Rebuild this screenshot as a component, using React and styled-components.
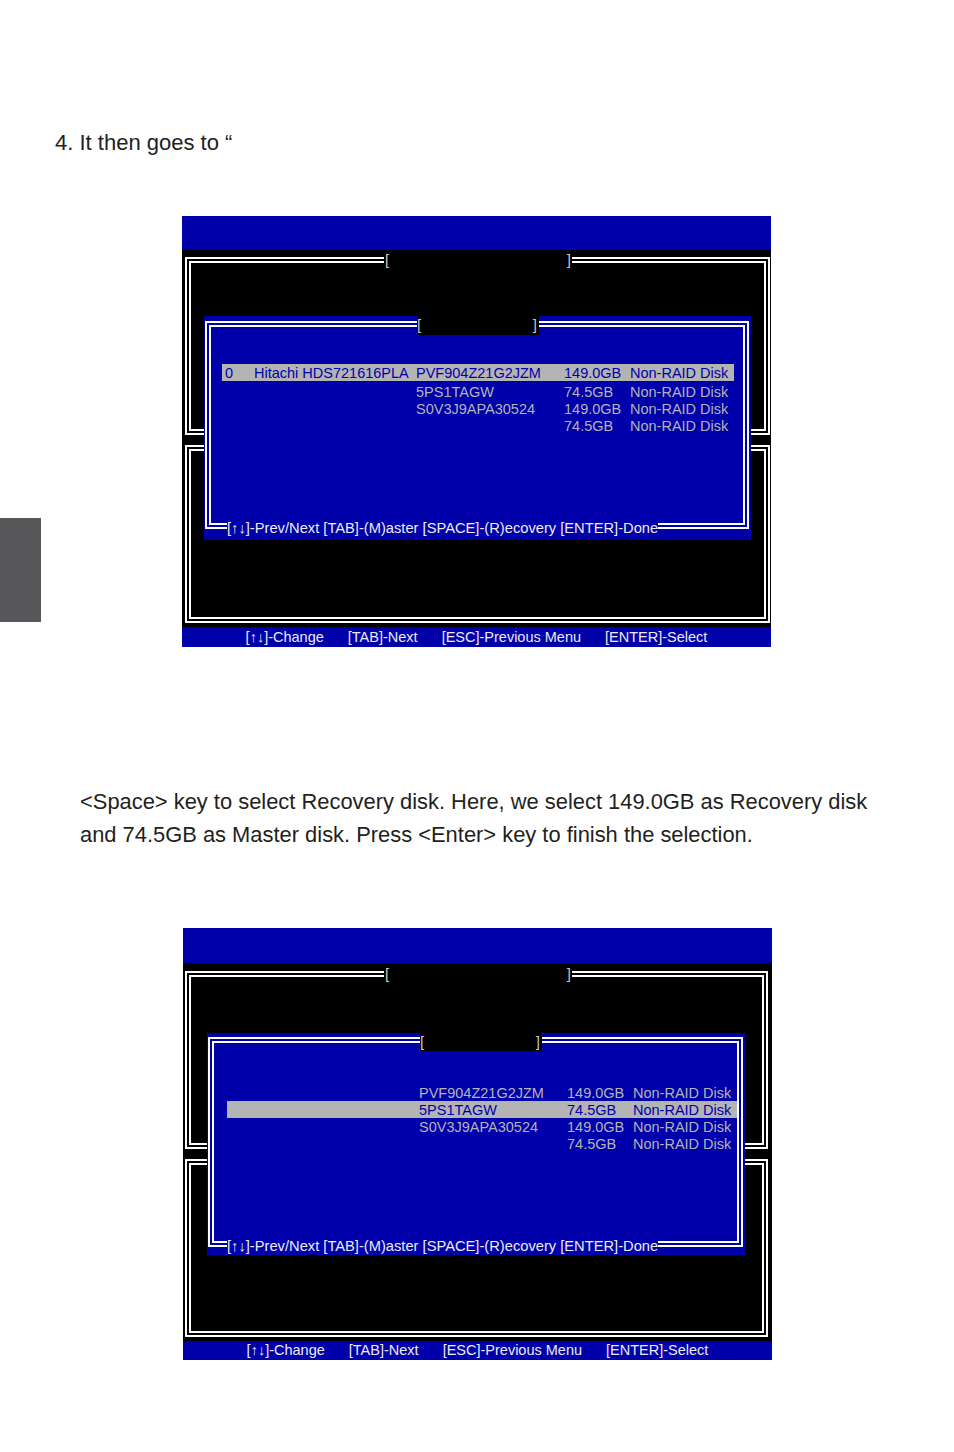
import React from 'react'
import styled, { createGlobalStyle } from 'styled-components'

const GlobalStyle = createGlobalStyle`
  html, body {
    margin: 0;
    padding: 0;
    background: #ffffff;
  }
  body {
    font-family: "Liberation Sans", Arial, sans-serif;
  }
`

const BLUE = '#0000aa'
const GREY = '#b4b4b4'
const LIGHT = '#ececec'

const Page = styled.div`
  width: 954px;
  min-height: 1452px;
  display: flex;
  flex-direction: column;
  color: #231f20;
`

const Intro = styled.p`
  margin: 0;
  padding: 130px 0 0 55px;
  font-size: 22px;
  line-height: 26px;
`

const FirstRow = styled.div`
  display: flex;
  align-items: flex-start;
  margin-top: 60px;
`

const SideTab = styled.div`
  width: 41px;
  height: 104px;
  margin-top: 302px;
  background: #58585a;
  flex-shrink: 0;
`

const Paragraph = styled.p`
  margin: 138px 0 0;
  padding-left: 80px;
  font-size: 21.9px;
  line-height: 33px;
`

const Screen = styled.div`
  width: 589px;
  display: flex;
  flex-direction: column;
  margin-left: ${p => p.$left}px;
  margin-top: ${p => p.$top || 0}px;
  font-family: "Liberation Sans", Arial, sans-serif;
  font-size: 14.5px;
`

const HeaderBar = styled.div`
  height: ${p => p.$h}px;
  background: ${BLUE};
`

const Body = styled.div`
  position: relative;
  height: ${p => p.$h}px;
  box-sizing: border-box;
  padding: ${p => p.$pad};
  background: #000;
  display: flex;
  flex-direction: column;
  gap: 10px;
`

const FrameBox = styled.div`
  position: relative;
  flex: 1;
  border: 6px double #ffffff;
`

const BoxTitle = styled.div`
  position: absolute;
  top: -11px;
  left: 193px;
  width: 188px;
  height: 16px;
  background: #000;
  display: flex;
  justify-content: space-between;
  padding: 0 1px;
  box-sizing: border-box;
  font-size: 15px;
  line-height: 16px;
  color: #c8c8c8;
`

const KeyBar = styled.div`
  height: ${p => p.$h}px;
  background: ${BLUE};
  color: ${LIGHT};
  display: flex;
  justify-content: center;
  align-items: center;
  gap: 24px;
  padding-bottom: 1px;
  box-sizing: border-box;
  line-height: 16px;
  white-space: nowrap;
`

const Dialog = styled.div`
  position: absolute;
  top: ${p => p.$d.top}px;
  left: ${p => p.$d.left}px;
  width: ${p => p.$d.width}px;
  height: ${p => p.$d.height}px;
  box-sizing: border-box;
  padding: ${p => p.$d.padTop}px 2px ${p => p.$d.padBottom}px 1px;
  background: ${BLUE};
  display: flex;
  flex-direction: column;
`

const DialogFrame = styled.div`
  flex: 1;
  border: 6px double #ffffff;
  padding-top: ${p => p.$d.rowsTop}px;
  padding-left: ${p => p.$d.rowsLeft}px;
`

const DialogTitle = styled.div`
  position: absolute;
  top: 0;
  left: 213px;
  width: 122px;
  height: ${p => p.$h}px;
  background: #000;
  display: flex;
  justify-content: space-between;
  align-items: flex-start;
  padding: 1px 2px 0 0;
  box-sizing: border-box;
  font-size: 15px;
  line-height: 15px;
  color: #c8c8c8;
`

const DialogHint = styled.div`
  position: absolute;
  left: ${p => p.$d.footLeft}px;
  bottom: ${p => p.$d.padBottom - 7}px;
  height: 16px;
  line-height: 16px;
  font-size: 14.7px;
  background: ${BLUE};
  color: ${LIGHT};
  white-space: nowrap;
`

const Rows = styled.div`
  width: ${p => p.$w}px;
  display: flex;
  flex-direction: column;
`

const DiskRow = styled.div`
  height: 17px;
  display: grid;
  grid-template-columns: 29px 162px 148px 66px auto;
  align-items: center;
  padding-left: ${p => p.$padL}px;
  margin-bottom: ${p => p.$after || 0}px;
  line-height: 16px;
  white-space: nowrap;
  background: ${p => (p.$sel ? GREY : 'transparent')};
  color: ${p => (p.$sel ? BLUE : GREY)};
`

const keys = ['[↑↓]-Change', '[TAB]-Next', '[ESC]-Previous Menu', '[ENTER]-Select']

const screens = [
  {
    id: 1,
    left: 141,
    headerH: 34,
    bodyH: 377,
    footerH: 20,
    bodyPad: '7px 1px 4px 3px',
    titleH: 19,
    dialog: { top: 66, left: 22, width: 547, height: 224, padTop: 5, padBottom: 11, footLeft: 23, rowsTop: 37, rowsLeft: 11, rowsWidth: 512, padL: 3 },
    rows: [
      { id: '0', model: 'Hitachi HDS721616PLA', serial: 'PVF904Z21G2JZM', size: '149.0GB', sel: true, after: 2 },
      { id: '', model: '', serial: '5PS1TAGW', size: '74.5GB' },
      { id: '', model: '', serial: 'S0V3J9APA30524', size: '149.0GB' },
      { id: '', model: '', serial: '', size: '74.5GB' },
    ],
  },
  {
    id: 2,
    left: 183,
    top: 77,
    headerH: 35,
    bodyH: 378,
    footerH: 19,
    bodyPad: '8px 4px 4px 2px',
    titleH: 18,
    dialog: { top: 70, left: 24, width: 538, height: 222, padTop: 4, padBottom: 8, footLeft: 20, rowsTop: 41, rowsLeft: 13, rowsWidth: 510, padL: 1 },
    rows: [
      { id: '', model: '', serial: 'PVF904Z21G2JZM', size: '149.0GB' },
      { id: '', model: '', serial: '5PS1TAGW', size: '74.5GB', sel: true },
      { id: '', model: '', serial: 'S0V3J9APA30524', size: '149.0GB' },
      { id: '', model: '', serial: '', size: '74.5GB' },
    ],
  },
]

function BiosScreen({ cfg }) {
  const d = cfg.dialog
  return (
    <Screen $left={cfg.left} $top={cfg.top}>
      <HeaderBar $h={cfg.headerH} />
      <Body $h={cfg.bodyH} $pad={cfg.bodyPad}>
        <FrameBox>
          <BoxTitle>
            <span>[</span>
            <span>]</span>
          </BoxTitle>
        </FrameBox>
        <FrameBox />
        <Dialog $d={d}>
          <DialogTitle $h={cfg.titleH}>
            <span>[</span>
            <span>]</span>
          </DialogTitle>
          <DialogFrame $d={d}>
            <Rows $w={d.rowsWidth}>
              {cfg.rows.map((r, i) => (
                <DiskRow key={i} $sel={r.sel} $after={r.after} $padL={d.padL}>
                  <span>{r.id}</span>
                  <span>{r.model}</span>
                  <span>{r.serial}</span>
                  <span>{r.size}</span>
                  <span>Non-RAID Disk</span>
                </DiskRow>
              ))}
            </Rows>
          </DialogFrame>
          <DialogHint $d={d}>[↑↓]-Prev/Next [TAB]-(M)aster [SPACE]-(R)ecovery [ENTER]-Done</DialogHint>
        </Dialog>
      </Body>
      <KeyBar $h={cfg.footerH}>
        {keys.map(k => (
          <span key={k}>{k}</span>
        ))}
      </KeyBar>
    </Screen>
  )
}

export default function App() {
  return (
    <>
      <GlobalStyle />
      <Page>
        <Intro>4. It then goes to “</Intro>
        <FirstRow>
          <SideTab />
          <BiosScreen cfg={screens[0]} />
        </FirstRow>
        <Paragraph>
          &lt;Space&gt; key to select Recovery disk. Here, we select 149.0GB as Recovery disk
          <br />
          and 74.5GB as Master disk. Press &lt;Enter&gt; key to finish the selection.
        </Paragraph>
        <BiosScreen cfg={screens[1]} />
      </Page>
    </>
  )
}
